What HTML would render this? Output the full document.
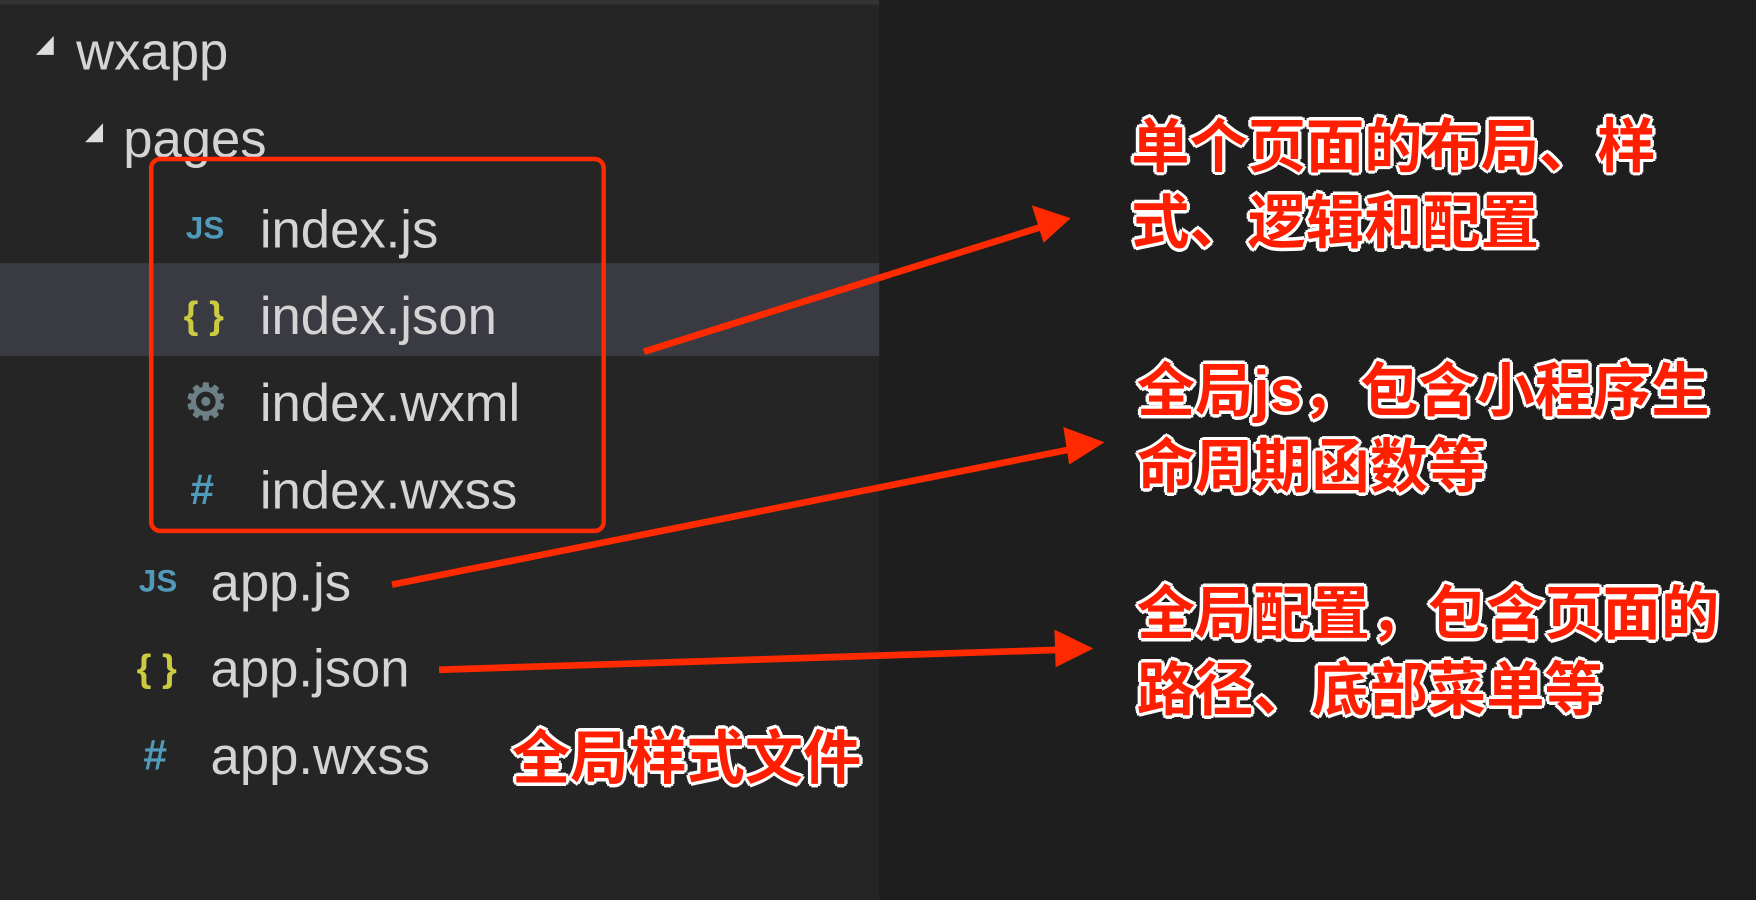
<!DOCTYPE html>
<html><head><meta charset="utf-8"><style>
body{margin:0;width:1756px;height:804px;background:#1e1e1e;position:relative;overflow:hidden;font-family:"Liberation Sans","Noto Sans CJK SC",sans-serif}
#w{position:absolute;left:0;top:0;width:1568px;height:718px;transform:scale(1.12);transform-origin:0 0}
.panel{position:absolute;left:0;top:4px;width:785px;height:800px;background:#252526}
.top{position:absolute;left:0;top:0;width:785px;height:4px;background:#333}
.hl{position:absolute;left:0;top:235px;width:785px;height:83px;background:#3a3b42}
.t{position:absolute;color:#d4d4d4;font-size:47px;line-height:48px;white-space:nowrap}
.ic{position:absolute;font-size:30px;font-weight:bold;line-height:48px}
.tri{position:absolute;width:0;height:0;border-left:16px solid transparent;border-bottom:17px solid #ddd}
.box{position:absolute;left:133px;top:140px;width:400px;height:328px;border:4px solid #ff2a00;border-radius:10px}
.cn{position:absolute;color:#ff1e00;font-weight:bold;font-size:52px;line-height:68px;white-space:nowrap;
text-shadow:3px 0 #fff,-3px 0 #fff,0 3px #fff,0 -3px #fff,2px 2px #fff,-2px -2px #fff,2px -2px #fff,-2px 2px #fff}
</style></head><body><div id="w">
<div class="panel"></div><div class="top"></div><div class="hl"></div>
<div class="tri" style="left:32px;top:32px"></div><div class="t" style="left:68px;top:22px">wxapp</div>
<div class="tri" style="left:76px;top:110px"></div><div class="t" style="left:110px;top:100px">pages</div>
<div class="ic" style="left:166px;top:180px;color:#519aba;font-size:28px">JS</div><div class="t" style="left:232px;top:181px">index.js</div>
<div class="ic" style="left:164px;top:258px;color:#cbcb41;font-size:34px">{ }</div><div class="t" style="left:232px;top:258px">index.json</div>
<div class="ic" style="left:164px;top:336px;color:#6d8086;font-size:44px">⚙</div><div class="t" style="left:232px;top:336px">index.wxml</div>
<div class="ic" style="left:170px;top:414px;color:#519aba;font-size:38px">#</div><div class="t" style="left:232px;top:414px">index.wxss</div>
<div class="ic" style="left:124px;top:495px;color:#519aba;font-size:28px">JS</div><div class="t" style="left:188px;top:496px">app.js</div>
<div class="ic" style="left:122px;top:573px;color:#cbcb41;font-size:34px">{ }</div><div class="t" style="left:188px;top:573px">app.json</div>
<div class="ic" style="left:128px;top:651px;color:#519aba;font-size:38px">#</div><div class="t" style="left:188px;top:651px">app.wxss</div>
<div class="box"></div>
<svg style="position:absolute;left:0;top:0" width="1568" height="718">
<g fill="#ff2a00" stroke="#ff2a00">
<line x1="575" y1="314" x2="935" y2="201" stroke-width="6"/><polygon points="955,195 922,184 932,216"/>
<line x1="350" y1="522" x2="962" y2="400" stroke-width="6"/><polygon points="985,395 950,382 955,414"/>
<line x1="392" y1="598" x2="952" y2="580" stroke-width="6"/><polygon points="975,579 942,563 943,595"/>
</g></svg>
<div class="cn" style="left:1010px;top:98px">单个页面的布局、样</div>
<div class="cn" style="left:1010px;top:166px">式、逻辑和配置</div>
<div class="cn" style="left:1015px;top:316px">全局js，包含小程序生</div>
<div class="cn" style="left:1015px;top:384px">命周期函数等</div>
<div class="cn" style="left:1015px;top:515px">全局配置，包含页面的</div>
<div class="cn" style="left:1015px;top:583px">路径、底部菜单等</div>
<div class="cn" style="left:457px;top:644px">全局样式文件</div>
</div></body></html>
